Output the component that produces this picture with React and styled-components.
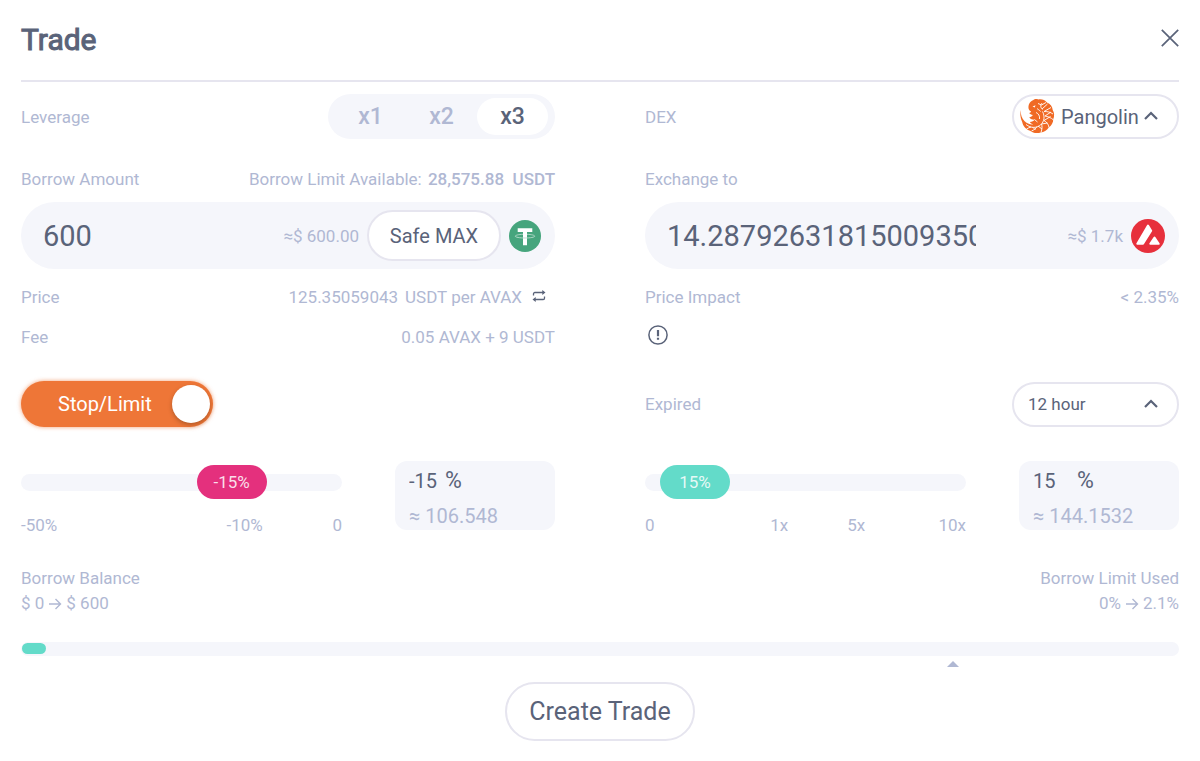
import React, { useState } from "react";
import styled, { createGlobalStyle } from "styled-components";

const c = {
  dark: "#5a6379",
  muted: "#b0b8d3",
  panel: "#f5f6fb",
  line: "#e6e5ef",
  orange: "#ee7637",
  pink: "#e4307d",
  teal: "#63dbc9",
};

const GlobalStyle = createGlobalStyle`
  *, *::before, *::after { box-sizing: border-box; }
  body { margin: 0; background: #fff; }
  body, button, input, select { font-family: Roboto, "Liberation Sans", sans-serif; }
`;

const Dialog = styled.form`
  padding: 0 21px 20px;
  color: ${c.muted};
  font-size: 17px;
  line-height: 22px;
`;

const Header = styled.header`
  display: flex;
  align-items: center;
  justify-content: space-between;
  height: 82px;
  border-bottom: 2px solid ${c.line};
`;

const Title = styled.h1`
  margin: 0;
  color: ${c.dark};
  font-size: 30px;
  line-height: 36px;
  font-weight: 400;
  -webkit-text-stroke: 1px ${c.dark};
`;

const CloseButton = styled.button`
  display: flex;
  padding: 0 0 4px;
  border: 0;
  background: none;
  color: ${c.dark};
  cursor: pointer;
`;

const Columns = styled.div`
  display: grid;
  grid-template-columns: repeat(2, minmax(0, 1fr));
  column-gap: 90px;
  align-items: ${(p) => p.$align || "center"};
  margin-top: ${(p) => p.$top}px;
`;

const Line = styled.div`
  display: flex;
  align-items: center;
  justify-content: space-between;
  min-width: 0;
`;

const Strong = styled.strong`
  margin-left: 2px;
  font-weight: 500;
`;

const Segments = styled.div`
  display: flex;
  height: 45px;
  padding: 4px 7px;
  border-radius: 23px;
  background: ${c.panel};
`;

const Segment = styled.label`
  position: relative;
  display: grid;
  place-items: center;
  width: 71px;
  border-radius: 19px;
  font-size: 23px;
  font-weight: 500;
  cursor: pointer;
  &:has(input:checked) { background: #fff; color: ${c.dark}; }
`;

const HiddenInput = styled.input`
  position: absolute;
  inset: 0;
  width: 100%;
  height: 100%;
  margin: 0;
  opacity: 0;
  cursor: pointer;
`;

const Picker = styled.div`
  position: relative;
  width: 167px;
  height: 45px;
`;

const Select = styled.select`
  appearance: none;
  width: 100%;
  height: 100%;
  padding: 0 34px 0 ${(p) => (p.$icon ? 47 : 14)}px;
  border: 2px solid ${c.line};
  border-radius: 23px;
  background: #fff;
  color: ${c.dark};
  font-size: ${(p) => (p.$icon ? 20 : 17)}px;
  cursor: pointer;
`;

const PickerIcon = styled.span`
  position: absolute;
  top: 4px;
  left: 8px;
  display: flex;
  pointer-events: none;
`;

const PickerArrow = styled.span`
  position: absolute;
  top: 17px;
  right: 21px;
  display: flex;
  color: ${c.dark};
  pointer-events: none;
`;

const Field = styled.div`
  display: flex;
  align-items: center;
  gap: 8px;
  height: 67px;
  padding: 0 14px 0 22px;
  border-radius: 34px;
  background: ${c.panel};
  & > svg { flex: none; }
`;

const AmountInput = styled.input`
  flex: 0 1 62%;
  min-width: 0;
  padding: 0;
  border: 0;
  outline: 0;
  background: none;
  color: ${c.dark};
  font-size: 29px;
`;

const Worth = styled.span`
  margin-left: auto;
  white-space: nowrap;
`;

const PillButton = styled.button`
  flex: none;
  width: ${(p) => (p.$large ? 190 : 134)}px;
  height: ${(p) => (p.$large ? 59 : 51)}px;
  padding: 0;
  border: 2px solid ${c.line};
  border-radius: 30px;
  background: #fff;
  color: ${c.dark};
  font-size: ${(p) => (p.$large ? 25 : 20)}px;
  white-space: nowrap;
  cursor: pointer;
`;

const IconButton = styled.button`
  display: inline-flex;
  margin: 0 ${(p) => p.$right || 0}px 0 ${(p) => p.$left || 0}px;
  padding: 0 0 3px;
  border: 0;
  background: none;
  color: ${c.dark};
  cursor: pointer;
`;

const Rate = styled.span`
  display: flex;
  align-items: center;
`;

const Unit = styled.span`
  margin-left: 7px;
`;

const Switch = styled.label`
  position: relative;
  display: flex;
  align-items: center;
  justify-content: space-between;
  width: 192px;
  height: 46px;
  padding: 0 3px 0 37px;
  border-radius: 23px;
  background: ${c.orange};
  box-shadow: 0 0 4px rgba(238, 118, 55, 0.7);
  color: #fff;
  font-size: 20px;
`;

const Knob = styled.span`
  width: 38px;
  height: 38px;
  border-radius: 50%;
  background: #fff;
  box-shadow: 0 2px 4px rgba(90, 50, 20, 0.4);
`;

const SliderLine = styled.div`
  display: grid;
  grid-template-columns: 1fr 160px;
  column-gap: 53px;
  align-items: start;
`;

const SliderBlock = styled.div`
  padding-top: 4px;
`;

const Track = styled.div`
  position: relative;
  display: flex;
  align-items: center;
  height: 34px;
`;

const Range = styled.input`
  appearance: none;
  width: 100%;
  height: 17px;
  margin: 0;
  border-radius: 9px;
  background: ${c.panel};
  &::-webkit-slider-thumb {
    appearance: none;
    width: 70px;
    height: 34px;
    border-radius: 17px;
    background: ${(p) => p.$color};
    cursor: grab;
  }
`;

const ThumbText = styled.output`
  position: absolute;
  width: 70px;
  color: rgba(255, 255, 255, 0.85);
  text-align: center;
  pointer-events: none;
`;

const Ticks = styled.div`
  display: grid;
  grid-template-columns: ${(p) => p.$columns};
  margin-top: 15px;
  & > :last-child { justify-self: end; }
`;

const PercentBox = styled.div`
  height: 69px;
  padding: 3px 14px;
  border-radius: 12px;
  background: ${c.panel};
  font-size: 20px;
`;

const PercentLine = styled.label`
  display: flex;
  align-items: center;
  height: 34px;
  color: ${c.dark};
  font-size: 23px;
`;

const PercentInput = styled.input`
  width: ${(p) => p.$width}px;
  padding: 0;
  border: 0;
  outline: 0;
  background: none;
  color: ${c.dark};
  font-size: 20px;
`;

const Approx = styled.div`
  line-height: 36px;
`;

const Balances = styled.div`
  display: flex;
  justify-content: space-between;
  margin-top: 30px;
  line-height: 25px;
`;

const Balance = styled.div`
  display: flex;
  flex-direction: column;
  align-items: ${(p) => p.$align};
`;

const Change = styled.span`
  display: flex;
  align-items: center;
  gap: 4px;
`;

const Bar = styled.div`
  height: 14px;
  margin-top: 26px;
  padding: 1px;
  border-radius: 7px;
  background: ${c.panel};
`;

const BarFill = styled.div`
  height: 11px;
  border-radius: 6px;
  background: ${c.teal};
`;

const MarkerLine = styled.div`
  display: flex;
  height: 11px;
  padding: 5px 0 0 80%;
`;

const Footer = styled.footer`
  display: flex;
  justify-content: center;
  margin-top: 15px;
`;

const CloseIcon = () => (
  <svg width="18" height="18" viewBox="0 0 18 18" fill="none" stroke="currentColor" strokeWidth="1.7" aria-hidden="true">
    <path d="M.8.8l16.4 16.4M17.2.8L.8 17.2" />
  </svg>
);

const ChevronUp = () => (
  <svg width="14" height="10" viewBox="0 0 14 10" fill="none" stroke="currentColor" strokeWidth="2.2" aria-hidden="true">
    <path d="M1 8l6-6 6 6" />
  </svg>
);

const SwapIcon = () => (
  <svg width="14" height="14" viewBox="0 0 14 14" fill="none" stroke="currentColor" strokeWidth="1.3" aria-hidden="true">
    <path d="M1.5 6.5V4.8a1.3 1.3 0 0 1 1.3-1.3H11M12.5 7.5v1.7a1.3 1.3 0 0 1-1.3 1.3H3" />
    <path d="M10.3 1l3.2 2.500-3.200 2.500zM3.700 8L.5 10.500 3.700 13z" fill="currentColor" stroke="none" />
  </svg>
);

const InfoIcon = () => (
  <svg width="20" height="20" viewBox="0 0 20 20" fill="none" stroke="currentColor" aria-hidden="true">
    <circle cx="10" cy="10" r="9.1" strokeWidth="1.5" />
    <path d="M10 5v6.200M10 12.800v2" strokeWidth="2.2" />
  </svg>
);

const ArrowIcon = () => (
  <svg width="14" height="14" viewBox="0 0 14 14" fill="none" stroke="currentColor" strokeWidth="1.4" aria-hidden="true">
    <path d="M1 7h11.500M7.500 2l5 5-5 5" />
  </svg>
);

const MarkerIcon = () => (
  <svg width="12" height="6" viewBox="0 0 12 6" aria-hidden="true">
    <path d="M6 0l6 6H0z" fill={c.muted} />
  </svg>
);

const TetherIcon = () => (
  <svg width="32" height="32" viewBox="0 0 32 32" aria-hidden="true">
    <circle cx="16" cy="16" r="16" fill="#46a57d" />
    <path d="M8.700 8.200h14.600v3.700H18v13.300h-4V11.900H8.700z" fill="#fff" />
    <path d="M14 14.300c-4.500.2-7.700.9-7.700 1.900s4.200 1.800 9.700 1.800 9.700-.8 9.700-1.800-3.200-1.700-7.700-1.900" fill="none" stroke="#b9ddcd" strokeWidth=".9" />
  </svg>
);

const AvaxIcon = () => (
  <svg width="34" height="34" viewBox="0 0 34 34" aria-hidden="true">
    <circle cx="17" cy="17" r="17" fill="#e7303c" />
    <g fill="#fff" stroke="#fff" strokeWidth="2" strokeLinejoin="round">
      <path d="M17 6.500l3.200 5.200L12 24.800H6.300z" />
      <path d="M23.500 18.500l4.200 6.300h-8.400z" />
    </g>
  </svg>
);

const PangolinIcon = () => (
  <svg width="36" height="36" viewBox="0 0 36 36" aria-hidden="true">
    <path
      d="M.6 12c0 4.500 1.200 8.200 3.800 11 2.500 2.700 5.600 3.700 9 3.400-1.800-.4-3-1.200-3.600-2.400 2.200 0 4-.8 5.200-2.400-2.200.2-4.400-.6-5.800-2.200 1.800-.3 3-1.100 3.700-2.300-1.700-.2-3-.9-3.700-2 1-.3 1.700-.9 2-1.700-1.500-.5-2.400-1.700-2.700-3.200C8.200 6.500 10 3.500 13 2.300c1.500-1.500 3.500-1.700 5.200-.9 3.200-.8 6.600.3 8.700 3 3.500 1.500 5.700 4.200 5.800 7.700 1.800 3 1.800 6.300.6 9 0 3.800-2 6.800-4.500 8.500-2 3-5 4.800-8 4.800-3.800 1.400-8 .6-10.700-1.600C6 31.500 3 28.200 2.200 24 .2 20 0 15.500.6 12z"
      fill="#f06a25"
    />
    <g fill="none" stroke="#fff" strokeWidth=".9">
      <path d="M6 26.500c5 4 11 3.500 14.500.5 4-3.500 4.500-9 2-13.500" />
      <path d="M22 5c-1.500 2-2 4 .5 6.500M18 5.500l3.500 1.500 4.500-2.500M22 11l5.500-5M24 13.500l7-4M24 13.500c3 0 6 .3 9 2.500M25 18l6-4M25 18c2.500.5 6 1.500 8.500 4M24 22.500l6.500-4M24 22.500c2.500 1.500 4.500 3.500 5 7M21.500 26l6-1M21.500 26c.8 2 .7 5-.5 8.500M18 28l4 3M17 28.500c-1 2-3 3.500-5.500 4.500M12.500 29l3 3M11 29c-1.500.5-3 1-4.500 2" />
      <path d="M16 14.500c2.500 1 4 3.500 3.500 6.500M17 10.500c1 1 2.500 1.500 3.500 3M14.500 21.500l3 2.500" />
    </g>
    <path d="M12.500 8.500l3-1.200-.8 2.200z" fill="#fff" />
  </svg>
);

const upsideAt = (pos) =>
  pos <= 40 ? pos * 2.5 : pos <= 70 ? 100 + ((pos - 40) * 400) / 30 : 500 + ((pos - 70) * 500) / 30;

function Slider({ label, color, min, max, value, text, onChange, columns, ticks }) {
  const ratio = (value - min) / (max - min);
  return (
    <SliderBlock>
      <Track>
        <Range
          type="range"
          aria-label={label}
          $color={color}
          min={min}
          max={max}
          value={value}
          onChange={(e) => onChange(Number(e.target.value))}
        />
        <ThumbText style={{ left: `calc((100% - 70px) * ${ratio})` }}>{text}</ThumbText>
      </Track>
      <Ticks $columns={columns}>
        {ticks.map((t) => (
          <span key={t}>{t}</span>
        ))}
      </Ticks>
    </SliderBlock>
  );
}

export default function App() {
  const [leverage, setLeverage] = useState("x3");
  const [stop, setStop] = useState(-15);
  const [upside, setUpside] = useState(6);
  const gain = Math.round(upsideAt(upside));

  return (
    <>
      <GlobalStyle />
      <Dialog onSubmit={(e) => e.preventDefault()}>
        <Header>
          <Title>Trade</Title>
          <CloseButton type="button" aria-label="Close">
            <CloseIcon />
          </CloseButton>
        </Header>

        <Columns $top={12}>
          <Line>
            <span id="leverage">Leverage</span>
            <Segments role="radiogroup" aria-labelledby="leverage">
              {["x1", "x2", "x3"].map((x) => (
                <Segment key={x}>
                  <HiddenInput type="radio" name="leverage" checked={leverage === x} onChange={() => setLeverage(x)} />
                  {x}
                </Segment>
              ))}
            </Segments>
          </Line>
          <Line>
            <label htmlFor="dex">DEX</label>
            <Picker>
              <Select id="dex" $icon>
                <option>Pangolin</option>
              </Select>
              <PickerIcon><PangolinIcon /></PickerIcon>
              <PickerArrow><ChevronUp /></PickerArrow>
            </Picker>
          </Line>
        </Columns>

        <Columns $top={29}>
          <Line>
            <label htmlFor="borrow">Borrow Amount</label>
            <span>Borrow Limit Available: <Strong>28,575.88&nbsp; USDT</Strong></span>
          </Line>
          <Line>
            <label htmlFor="exchange">Exchange to</label>
          </Line>
        </Columns>

        <Columns $top={12}>
          <Field>
            <AmountInput id="borrow" defaultValue="600" />
            <Worth>≈$ 600.00</Worth>
            <PillButton type="button">Safe MAX</PillButton>
            <TetherIcon />
          </Field>
          <Field>
            <AmountInput id="exchange" defaultValue="14.287926318150093500" />
            <Worth>≈$ 1.7k</Worth>
            <AvaxIcon />
          </Field>
        </Columns>

        <Columns $top={17}>
          <Line>
            <span>Price</span>
            <Rate>
              125.35059043 <Unit>USDT per AVAX</Unit>
              <IconButton type="button" aria-label="Swap price direction" $left={10} $right={9}>
                <SwapIcon />
              </IconButton>
            </Rate>
          </Line>
          <Line>
            <span>Price Impact</span>
            <span>&lt; 2.35%</span>
          </Line>
        </Columns>

        <Columns $top={17}>
          <Line>
            <span>Fee</span>
            <span>0.05 AVAX + 9 USDT</span>
          </Line>
          <Line>
            <IconButton type="button" aria-label="Price details" $left={3}>
              <InfoIcon />
            </IconButton>
          </Line>
        </Columns>

        <Columns $top={33}>
          <Switch>
            <HiddenInput type="checkbox" role="switch" defaultChecked />
            Stop/Limit
            <Knob />
          </Switch>
          <Line>
            <label htmlFor="expired">Expired</label>
            <Picker>
              <Select id="expired">
                <option>12 hour</option>
              </Select>
              <PickerArrow><ChevronUp /></PickerArrow>
            </Picker>
          </Line>
        </Columns>

        <Columns $top={34} $align="start">
          <SliderLine>
            <Slider
              label="Stop loss"
              color={c.pink}
              min={-50}
              max={0}
              value={stop}
              text={`${stop}%`}
              onChange={setStop}
              columns="64% 1fr auto"
              ticks={["-50%", "-10%", "0"]}
            />
            <PercentBox>
              <PercentLine>
                <PercentInput $width={36} aria-label="Stop loss percent" value={stop} readOnly />%
              </PercentLine>
              <Approx>≈ 106.548</Approx>
            </PercentBox>
          </SliderLine>
          <SliderLine>
            <Slider
              label="Take profit"
              color={c.teal}
              min={0}
              max={100}
              value={upside}
              text={`${gain}%`}
              onChange={setUpside}
              columns="39% 24% 1fr auto"
              ticks={["0", "1x", "5x", "10x"]}
            />
            <PercentBox>
              <PercentLine>
                <PercentInput $width={44} aria-label="Take profit percent" value={gain} readOnly />%
              </PercentLine>
              <Approx>≈ 144.1532</Approx>
            </PercentBox>
          </SliderLine>
        </Columns>

        <Balances>
          <Balance $align="flex-start">
            <span>Borrow Balance</span>
            <Change>$ 0 <ArrowIcon /> $ 600</Change>
          </Balance>
          <Balance $align="flex-end">
            <span>Borrow Limit Used</span>
            <Change>0% <ArrowIcon /> 2.1%</Change>
          </Balance>
        </Balances>

        <Bar role="progressbar" aria-label="Borrow limit used" aria-valuenow={2.1}>
          <BarFill style={{ width: "2.1%" }} />
        </Bar>
        <MarkerLine><MarkerIcon /></MarkerLine>

        <Footer>
          <PillButton type="submit" $large>Create Trade</PillButton>
        </Footer>
      </Dialog>
    </>
  );
}
